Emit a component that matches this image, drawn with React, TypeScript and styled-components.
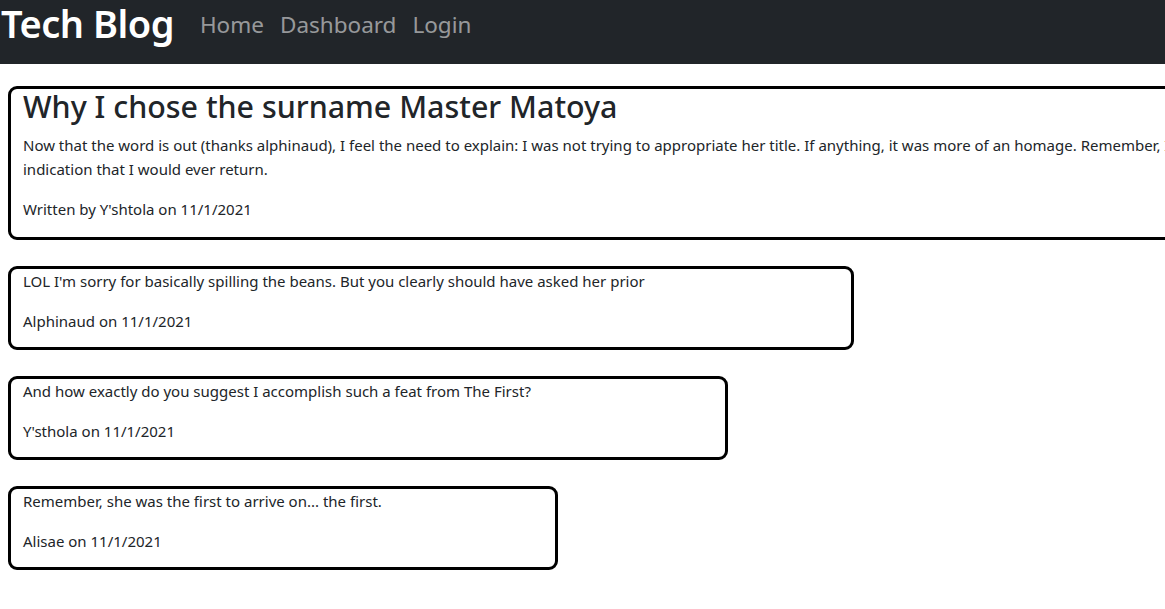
import React from "react";
import styled, { createGlobalStyle } from "styled-components";

const Global = createGlobalStyle`
  html, body { margin: 0; padding: 0; }
  body {
    font-family: "Noto Sans", "Open Sans", sans-serif;
    font-size: 15px;
    line-height: 24px;
    color: #212529;
    background: #fff;
    overflow-x: hidden;
  }
  * { box-sizing: border-box; }
`;

const Navbar = styled.nav`
  height: 64px;
  background: #212529;
  display: flex;
  align-items: flex-start;
  padding: 0 0 0 1px;
`;

const Brand = styled.a`
  font-size: 38px;
  line-height: 46px;
  font-weight: 600;
  color: #fff;
  text-decoration: none;
  margin-right: 26px;
  letter-spacing: -0.5px;
`;

const NavList = styled.div`
  display: flex;
  gap: 16px;
  padding-top: 7px;
`;

const NavLink = styled.a`
  font-size: 22.5px;
  line-height: 36px;
  color: rgba(255, 255, 255, 0.55);
  text-decoration: none;
`;

const Main = styled.main`
  display: flex;
  flex-direction: column;
  align-items: flex-start;
  gap: 26px;
  padding: 22px 0 0 8px;
`;

const Card = styled.section<{ $w: number }>`
  width: ${(p) => p.$w}px;
  flex-shrink: 0;
  border: 3px solid #000;
  border-radius: 9px;
  padding: 0 12px 14px 12px;
`;

const PostCard = styled(Card)`
  padding-bottom: 16px;
`;

const Title = styled.h2`
  margin: 0 0 8px 0;
  font-size: 30.4px;
  line-height: 36px;
  font-weight: 500;
`;

const Text = styled.p`
  margin: 0 0 16px 0;
  &:last-child { margin-bottom: 0; }
`;

const comments = [
  { body: "LOL I'm sorry for basically spilling the beans. But you clearly should have asked her prior", who: "Alphinaud", w: 846 },
  { body: "And how exactly do you suggest I accomplish such a feat from The First?", who: "Y'sthola", w: 720 },
  { body: "Remember, she was the first to arrive on... the first.", who: "Alisae", w: 550 },
];

export default function App() {
  return (
    <>
      <Global />
      <Navbar>
        <Brand href="#">Tech Blog</Brand>
        <NavList>
          <NavLink href="#">Home</NavLink>
          <NavLink href="#">Dashboard</NavLink>
          <NavLink href="#">Login</NavLink>
        </NavList>
      </Navbar>
      <Main>
        <PostCard $w={1300}>
          <Title>Why I chose the surname Master Matoya</Title>
          <Text>
            Now that the word is out (thanks alphinaud), I feel the need to explain: I was not trying to appropriate her title. If anything, it was more of an homage. Remember, I left without any indication that I would ever return.
          </Text>
          <Text>Written by Y'shtola on 11/1/2021</Text>
        </PostCard>
        {comments.map((c) => (
          <Card key={c.who} $w={c.w}>
            <Text>{c.body}</Text>
            <Text>{c.who} on 11/1/2021</Text>
          </Card>
        ))}
      </Main>
    </>
  );
}
